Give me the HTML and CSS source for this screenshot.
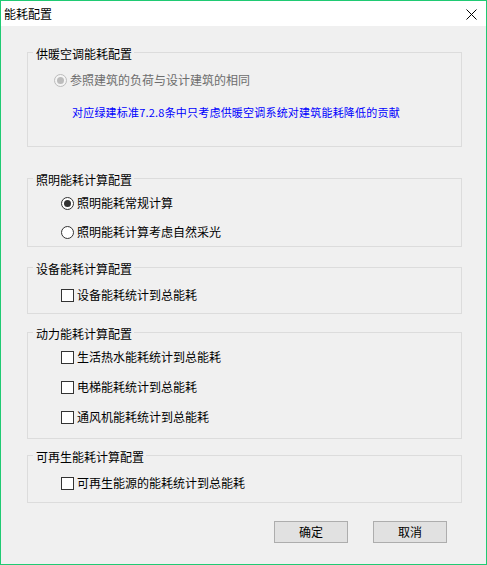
FILE: index.html
```html
<!DOCTYPE html>
<html lang="zh-CN">
<head>
<meta charset="utf-8">
<title>能耗配置</title>
<link rel="stylesheet" href="styles.css">
</head>
<body>
<div class="window">
  <div class="titlebar">
    <span class="title">能耗配置</span>
    <svg class="close" width="11" height="11" viewBox="0 0 11 11"><path d="M0.5 0.5 L10.5 10.5 M10.5 0.5 L0.5 10.5" stroke="#000" stroke-width="1" fill="none"/></svg>
  </div>
  <div class="content">
    <fieldset class="group g1">
      <legend>供暖空调能耗配置</legend>
      <div class="inner">
        <label class="opt opt-wide disabled"><span class="radio checked dis"></span>参照建筑的负荷与设计建筑的相同</label>
        <p class="note">对应绿建标准7.2.8条中只考虑供暖空调系统对建筑能耗降低的贡献</p>
      </div>
    </fieldset>
    <fieldset class="group g2">
      <legend>照明能耗计算配置</legend>
      <div class="inner">
        <label class="opt"><span class="radio checked"></span>照明能耗常规计算</label>
        <label class="opt"><span class="radio"></span>照明能耗计算考虑自然采光</label>
      </div>
    </fieldset>
    <fieldset class="group g3">
      <legend>设备能耗计算配置</legend>
      <div class="inner">
        <label class="opt"><span class="check"></span>设备能耗统计到总能耗</label>
      </div>
    </fieldset>
    <fieldset class="group g4">
      <legend>动力能耗计算配置</legend>
      <div class="inner">
        <label class="opt"><span class="check"></span>生活热水能耗统计到总能耗</label>
        <label class="opt"><span class="check"></span>电梯能耗统计到总能耗</label>
        <label class="opt"><span class="check"></span>通风机能耗统计到总能耗</label>
      </div>
    </fieldset>
    <fieldset class="group g5">
      <legend>可再生能耗计算配置</legend>
      <div class="inner">
        <label class="opt"><span class="check"></span>可再生能源的能耗统计到总能耗</label>
      </div>
    </fieldset>
    <div class="buttons">
      <button class="btn">确定</button>
      <button class="btn">取消</button>
    </div>
  </div>
</div>
</body>
</html>
```

FILE: styles.css
```css
* { box-sizing: border-box; }
html, body {
  margin: 0;
  padding: 0;
  background: #f0f0f0;
}
body {
  font-family: "Noto Sans CJK SC", "Noto Sans", sans-serif;
  font-size: 12px;
  line-height: 16px;
  color: #000;
}
.window {
  width: 487px;
  height: 565px;
  border: 1px solid #1fca73;
  display: flex;
  flex-direction: column;
  background: #f0f0f0;
}
.titlebar {
  height: 25px;
  flex: none;
  background: #fff;
  display: flex;
  align-items: center;
  justify-content: space-between;
  padding: 0 9px 0 3px;
}
.title {
  font-size: 12px;
  line-height: 16px;
}
.close {
  display: block;
  margin-top: 1px;
}
.content {
  flex: 1;
  display: flex;
  flex-direction: column;
  padding: 16px 24px 0 26px;
}
.group {
  margin: 0;
  padding: 0;
  border: 1px solid #dcdcdc;
  min-width: 0;
}
.group legend {
  margin-left: 5px;
  padding: 4px 2px 0 3px;
  font-size: 12px;
  line-height: 16px;
}
.g2 { margin-top: 21px; }
.g3 { margin-top: 10px; }
.g4 { margin-top: 8px; }
.g5 { margin-top: 6px; }

.inner {
  display: flex;
  flex-direction: column;
  align-items: flex-start;
}
.g1 .inner { padding: 8px 0 26px 0; }
.g2 .inner { padding: 5px 0 4px 0; gap: 9px; }
.g3 .inner { padding: 8px 0 8px 0; }
.g4 .inner { padding: 5px 0 11px 0; gap: 10px; }
.g5 .inner { padding: 8px 0 9px 0; }

.opt {
  height: 20px;
  display: flex;
  align-items: center;
  gap: 3px;
  margin-left: 33px;
  white-space: nowrap;
}
.opt-wide { margin-left: 26px; }
.opt.disabled { color: #6d6d6d; }

.radio, .check {
  width: 13px;
  height: 13px;
  flex: none;
  border: 1px solid #333;
  background: #fff;
  display: flex;
  align-items: center;
  justify-content: center;
}
.radio { border-radius: 50%; }
.radio.checked::after {
  content: "";
  width: 7px;
  height: 7px;
  border-radius: 50%;
  background: #333;
}
.radio.dis {
  border-color: #bcbcbc;
  background: #f4f4f4;
}
.radio.dis::after { background: #bcbcbc; }

.note {
  margin: 14px 0 0 44px;
  height: 16px;
  font-size: 11px;
  line-height: 16px;
  color: #0000ff;
  letter-spacing: 0.2px;
  white-space: nowrap;
}

.buttons {
  display: flex;
  justify-content: flex-end;
  gap: 25px;
  margin-top: 18px;
  padding-right: 15px;
}
.btn {
  width: 74px;
  height: 22px;
  margin: 0;
  padding: 0;
  border: 1px solid #adadad;
  background: #e1e1e1;
  font-family: "Noto Sans CJK SC", "Noto Sans", sans-serif;
  font-size: 12px;
  line-height: 16px;
  color: #000;
}
```
